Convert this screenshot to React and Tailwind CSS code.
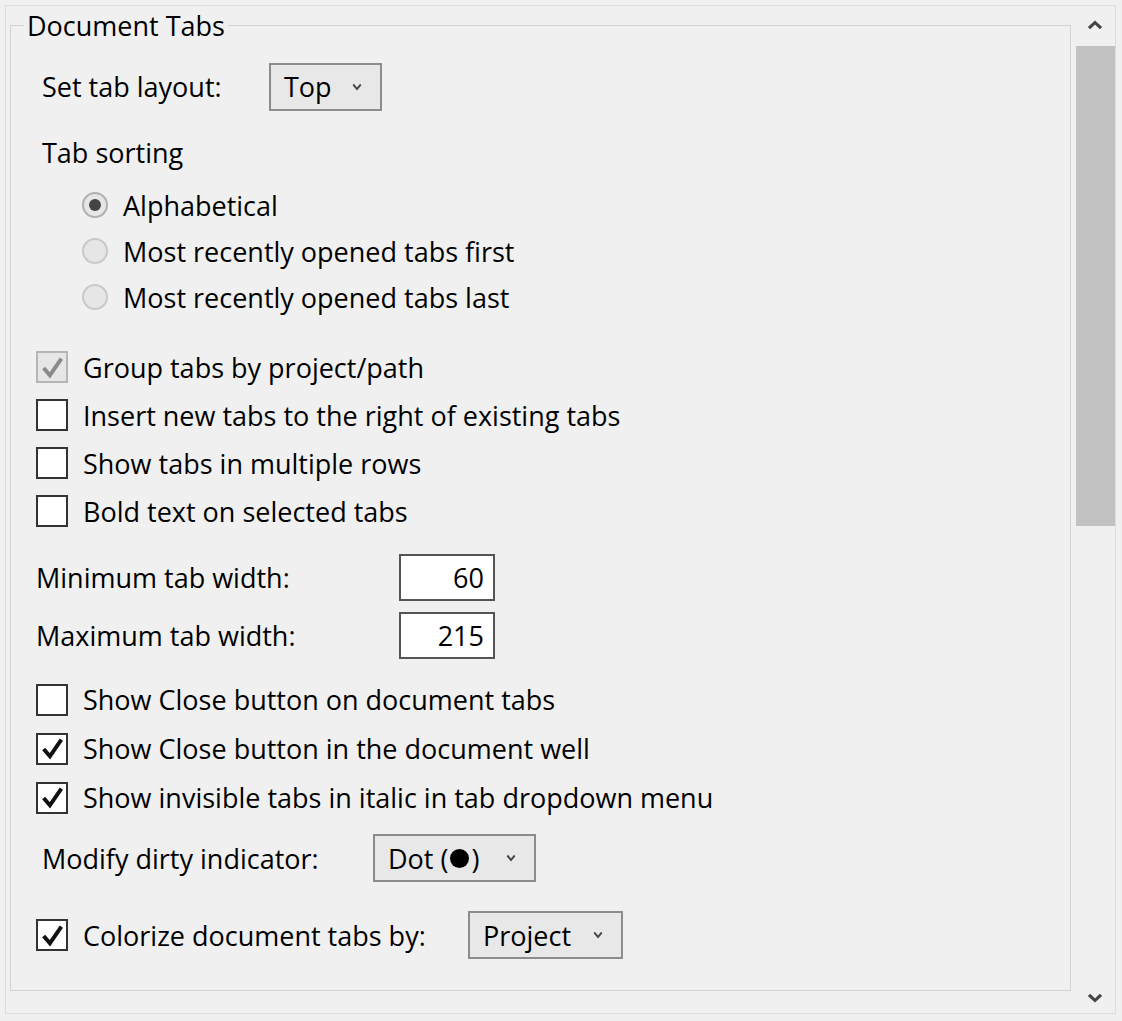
import React from "react";

const FONT = { fontFamily: '"Open Sans", "Noto Sans", sans-serif' };

function Chevron({ className = "", w = 11, h = 8, sw = 1.9 }) {
  return (
    <svg width={w} height={h} viewBox="0 0 12 8" preserveAspectRatio="none" className={className}>
      <path d="M1.5 1.5 L6 6 L10.5 1.5" fill="none" stroke="#444" strokeWidth={sw} />
    </svg>
  );
}

function Check({ gray }) {
  return (
    <svg width="25" height="25" viewBox="0 0 24 24">
      <path
        d="M3.5 12.5 L9.5 19.5 L20.5 3.5"
        fill="none"
        stroke={gray ? "#8a8a8a" : "#111"}
        strokeWidth="3.8"
        strokeLinejoin="miter"
      />
    </svg>
  );
}

function Checkbox({ checked, disabled, label, h = "h-[48px]", mt = "" }) {
  return (
    <div className={`flex items-center ${h} ${mt}`}>
      <div
        className={`w-[32px] h-[32px] flex items-center justify-center border-2 ${
          disabled ? "border-[#b5b5b5] bg-[#e6e6e6]" : "border-[#333] bg-white"
        }`}
      >
        {checked && <Check gray={disabled} />}
      </div>
      <span className="ml-[15px]">{label}</span>
    </div>
  );
}

function Radio({ checked, label }) {
  return (
    <div className="flex items-center h-[46px] pl-[46px]">
      <div
        className={`w-[26px] h-[26px] rounded-full border-2 flex items-center justify-center ${
          checked ? "border-[#b0b0b0] bg-[#e6e6e6]" : "border-[#c8c8c8] bg-[#e6e6e6]"
        }`}
      >
        {checked && <div className="w-[12px] h-[12px] rounded-full bg-[#444]" />}
      </div>
      <span className="ml-[15px]">{label}</span>
    </div>
  );
}

function Dropdown({ w, children }) {
  return (
    <div
      className={`${w} h-[48px] border-2 border-[#8c8c8c] bg-[#e8e8e8] flex items-center justify-between pl-[13px] pr-[18px]`}
    >
      <span className="flex items-center">{children}</span>
      <Chevron w={10} sw={2.2} />
    </div>
  );
}

function NumberBox({ value }) {
  return (
    <div className="w-[96px] h-[47px] border-2 border-[#555] bg-white flex items-center justify-end pr-[9px]">
      {value}
    </div>
  );
}

export default function App() {
  return (
    <div
      className="w-[1122px] h-[1021px] bg-[#f0f0f0] p-[5px] text-[#000] text-[27px] leading-[1.15]"
      style={FONT}
    >
      <div className="h-[1009px] w-[1111px] border border-[#dcdcdc] flex">
        <div className="flex-1 pl-[4px] pt-[4px]">
          <fieldset className="h-[981px] w-[1061px] border border-[#d2d2d2]">
            <legend className="ml-[13px] px-[3px]">Document Tabs</legend>
            <div className="pl-[25px] pt-[21px] flex flex-col">
              {/* Set tab layout */}
              <div className="flex items-center h-[49px] pl-[6px]">
                <span className="w-[227px]">Set tab layout:</span>
                <Dropdown w="w-[113px]">Top</Dropdown>
              </div>
              <div className="flex items-center h-[30px] mt-[26px] pl-[6px]">Tab sorting</div>
              <div className="mt-[15px] flex flex-col">
                <Radio checked label="Alphabetical" />
                <Radio label="Most recently opened tabs first" />
                <Radio label="Most recently opened tabs last" />
              </div>
              <div className="mt-[23px] flex flex-col">
                <Checkbox checked disabled label="Group tabs by project/path" />
                <Checkbox label="Insert new tabs to the right of existing tabs" />
                <Checkbox label="Show tabs in multiple rows" />
                <Checkbox label="Bold text on selected tabs" />
              </div>
              <div className="flex items-center h-[47px] mt-[19px]">
                <span className="w-[363px]">Minimum tab width:</span>
                <NumberBox value="60" />
              </div>
              <div className="flex items-center h-[47px] mt-[11px]">
                <span className="w-[363px]">Maximum tab width:</span>
                <NumberBox value="215" />
              </div>
              <div className="mt-[16px] flex flex-col">
                <Checkbox h="h-[49px]" label="Show Close button on document tabs" />
                <Checkbox h="h-[49px]" checked label="Show Close button in the document well" />
                <Checkbox h="h-[49px]" checked label="Show invisible tabs in italic in tab dropdown menu" />
              </div>
              <div className="flex items-center h-[48px] mt-[12px] pl-[6px]">
                <span className="w-[331px]">Modify dirty indicator:</span>
                <Dropdown w="w-[163px]">
                  Dot (<span className="inline-block w-[19px] h-[19px] rounded-full bg-black mx-[2px]" aria-label="●" />)
                </Dropdown>
              </div>
              <div className="flex items-center h-[48px] mt-[29px]">
                <div className="w-[32px] h-[32px] flex items-center justify-center border-2 border-[#333] bg-white">
                  <Check />
                </div>
                <span className="ml-[15px] w-[385px]">Colorize document tabs by:</span>
                <Dropdown w="w-[155px]">Project</Dropdown>
              </div>
            </div>
          </fieldset>
        </div>
        <div className="w-[40px] flex flex-col">
          <div className="h-[40px] flex items-center justify-center pb-[2px]">
            <Chevron className="rotate-180" w={16} h={10} sw={2.4} />
          </div>
          <div className="h-[480px] bg-[#c2c2c2] ml-[1px]" />
          <div className="flex-1" />
          <div className="h-[30px] flex items-center justify-center">
            <Chevron w={16} h={10} sw={2.4} />
          </div>
        </div>
      </div>
    </div>
  );
}
